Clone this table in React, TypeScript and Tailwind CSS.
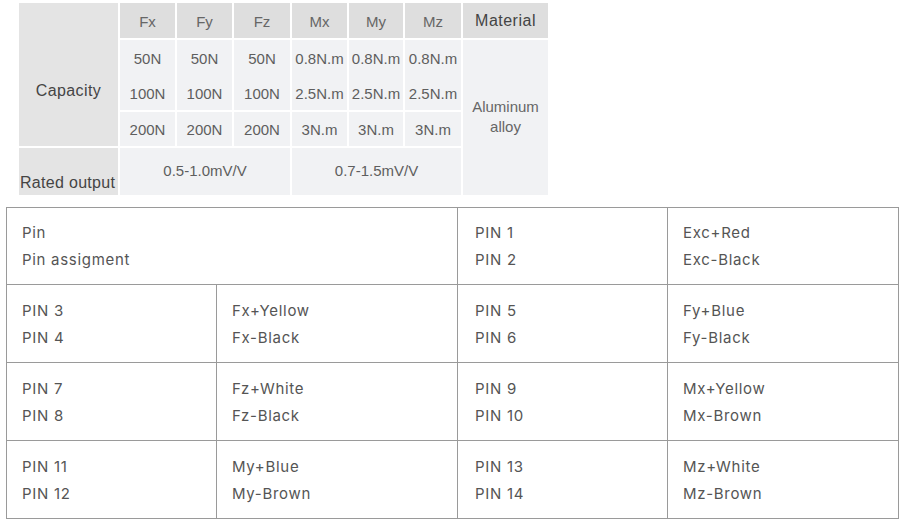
const data = [
  ['50N', '50N', '50N', '0.8N.m', '0.8N.m', '0.8N.m'],
  ['100N', '100N', '100N', '2.5N.m', '2.5N.m', '2.5N.m'],
  ['200N', '200N', '200N', '3N.m', '3N.m', '3N.m'],
]

const pinRows = [
  [['PIN 3', 'PIN 4'], ['Fx+Yellow', 'Fx-Black'], ['PIN 5', 'PIN 6'], ['Fy+Blue', 'Fy-Black']],
  [['PIN 7', 'PIN 8'], ['Fz+White', 'Fz-Black'], ['PIN 9', 'PIN 10'], ['Mx+Yellow', 'Mx-Brown']],
  [['PIN 11', 'PIN 12'], ['My+Blue', 'My-Brown'], ['PIN 13', 'PIN 14'], ['Mz+White', 'Mz-Brown']],
]

function SpecTable() {
  const head = 'bg-[#dedede] flex items-center justify-center pt-[4px] text-[15px] text-[#666]'
  const cell = 'bg-[#f1f2f4] flex items-center justify-center text-[15px] text-[#5e5e5e]'
  return (
    <div
      className="ml-[19px] w-[529px] grid grid-cols-[99px_55px_55px_56px_55px_54px_56px_85px] grid-rows-[35px_35px_33px_34px_47px] gap-[2px] bg-white"
      style={{ fontFamily: '"Liberation Sans", Arial, sans-serif' }}
    >
      <div className="row-span-4 bg-[#e4e4e4] flex flex-col">
        <div className="h-[37px]" />
        <div className="flex-1 flex items-center justify-center pb-[4px] text-[16px] tracking-[0.4px] text-[#444]">
          Capacity
        </div>
      </div>
      {['Fx', 'Fy', 'Fz', 'Mx', 'My', 'Mz'].map((h) => (
        <div key={h} className={head}>
          {h}
        </div>
      ))}
      <div className="bg-[#dedede] flex items-center justify-center text-[16px] tracking-[0.5px] text-[#444]">
        Material
      </div>

      {data[0].map((v, i) => (
        <div key={i} className="row-span-2 bg-[#f1f2f4] flex flex-col text-[15px] text-[#5e5e5e]">
          <div className="h-[35px] flex items-center justify-center pt-[4px]">{v}</div>
          <div className="flex-1 flex items-center justify-center pt-[4px]">{data[1][i]}</div>
        </div>
      ))}
      <div className="row-span-4 bg-[#f1f2f4] flex flex-col items-center justify-center pb-[2px] text-[15px] leading-[20px] text-[#666]">
        <span>Aluminum</span>
        <span>alloy</span>
      </div>

      {data[2].map((v, i) => (
        <div key={i} className={cell + ' pt-[2px]'}>
          {v}
        </div>
      ))}

      <div className="bg-[#e4e4e4] flex items-end pl-[1px] pb-0 text-[16px] tracking-[0.3px] text-[#444]">
        Rated output
      </div>
      <div className={cell + ' col-span-3'}>0.5-1.0mV/V</div>
      <div className={cell + ' col-span-3'}>0.7-1.5mV/V</div>
    </div>
  )
}

function Cell({ lines, pad = 'pl-[15px]' }: { lines: string[]; pad?: string }) {
  return (
    <div className={'bg-white flex flex-col justify-center ' + pad}>
      {lines.map((l) => (
        <div key={l} className="leading-[27px]">
          {l}
        </div>
      ))}
    </div>
  )
}

function PinTable() {
  return (
    <div
      className="ml-[6px] mt-[12px] w-[893px] grid grid-cols-[209px_240px_209px_230px] grid-rows-[76px_77px_77px_77px] gap-px bg-[#9a9a9a] border border-[#9a9a9a] text-[15px] tracking-[0.7px] text-[#555]"
      style={{ fontFamily: 'Inter, "Noto Sans", sans-serif' }}
    >
      <div className="col-span-2 bg-white flex flex-col justify-center pl-[15px]">
        <div className="leading-[27px]">Pin</div>
        <div className="leading-[27px]">Pin assigment</div>
      </div>
      <Cell lines={['PIN 1', 'PIN 2']} pad="pl-[17px]" />
      <Cell lines={['Exc+Red', 'Exc-Black']} />
      {pinRows.map((r, i) =>
        r.map((c, j) => <Cell key={i + '-' + j} lines={c} pad={j === 2 ? 'pl-[17px]' : 'pl-[15px]'} />)
      )}
    </div>
  )
}

export default function App() {
  return (
    <div className="w-[907px] h-[530px] bg-white pt-[3px]">
      <SpecTable />
      <PinTable />
    </div>
  )
}
